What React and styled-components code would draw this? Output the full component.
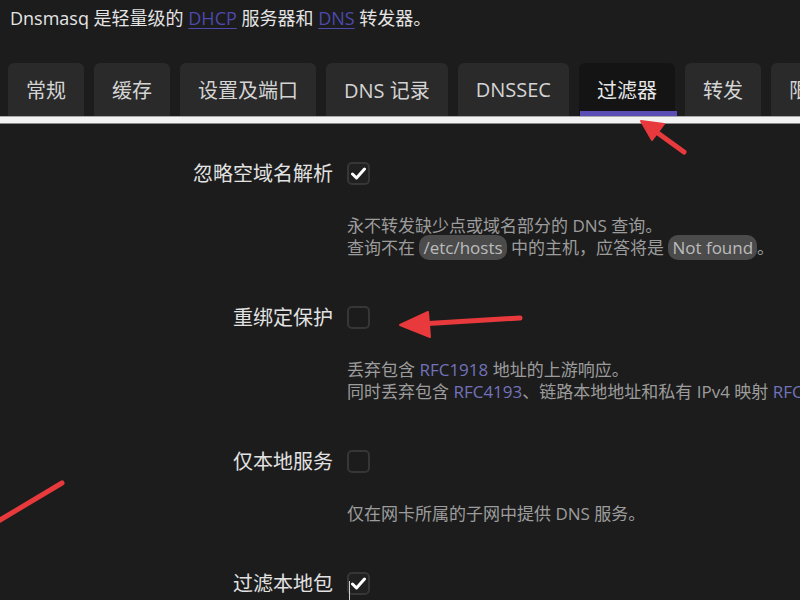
import React from "react";
import styled, { createGlobalStyle, css } from "styled-components";

const GlobalStyle = createGlobalStyle`
  html, body {
    margin: 0;
    padding: 0;
    background: #1c1c1c;
  }
  body {
    font-family: "Open Sans", "Noto Sans CJK SC", sans-serif;
    color: #e0e0e0;
  }
`;

//Page
const Page = styled.div`
  position: relative;
  width: 800px;
  height: 600px;
  overflow: hidden;
  background: #1c1c1c;
`;

const Intro = styled.p`
  margin: 0;
  padding: 5px 10px 0;
  height: 63px;
  box-sizing: border-box;
  font-size: 18px;
  line-height: 26px;
  color: #e4e4e4;
`;

const Link = styled.a`
  color: ${({muted}) => muted ? '#7272bb' : '#4d49ad'};
  text-decoration: ${({plain}) => plain ? 'none' : 'underline'};
  text-underline-offset: 3px;
`;

//Tabs
const TabBar = styled.nav`
  display: flex;
  gap: 10px;
  padding-left: 8px;
  white-space: nowrap;
  overflow: hidden;
`;

const Tab = styled.div`
  position: relative;
  flex-shrink: 0;
  display: flex;
  align-items: center;
  height: 53px;
  padding: 0 18px;
  border-radius: 6px 6px 0 0;
  background: #2a2a2a;
  color: #d4d4d4;
  font-size: 20px;

  ${({active}) => active && css`
    background: #141414;
    color: #e8e8e8;
    &::after {
      content: "";
      position: absolute;
      left: 1px;
      right: -2px;
      bottom: 0;
      height: 5px;
      background: #5a4db5;
    }
  `}
`;

const Strip = styled.div`
  height: 6px;
  background: #f2f2f2;
  border-top: 1px solid #a9a9a9;
  border-bottom: 1px solid #8a8a8a;
`;

//Form
const Form = styled.section`
  display: flex;
  flex-direction: column;
  gap: 47px;
  padding-top: 38px;
`;

const Row = styled.div`
  display: grid;
  grid-template-columns: 333px 1fr;
  column-gap: 14px;
  align-items: start;
`;

const Label = styled.label`
  text-align: right;
  font-size: 20px;
  line-height: 23px;
  color: #e2e2e2;
  white-space: nowrap;
`;

const Control = styled.div`
  display: flex;
  flex-direction: column;
  align-items: flex-start;
  min-width: 0;
`;

const Box = styled.span`
  display: flex;
  align-items: center;
  justify-content: center;
  width: 23px;
  height: 23px;
  box-sizing: border-box;
  border: 2px solid #363636;
  border-radius: 5px;
  background: ${({checked}) => checked ? '#202020' : '#1c1c1c'};
`;

const Desc = styled.div`
  margin-top: 30px;
  font-size: 17px;
  line-height: 22px;
  color: #9c9c9c;
  white-space: nowrap;
`;

const Code = styled.code`
  font-family: "Open Sans", "Noto Sans CJK SC", sans-serif;
  font-size: 17px;
  padding: 1px 4px;
  border-radius: 10px;
  background: #4b4b4b;
  color: #bcbcbc;
`;

const Overlay = styled.svg`
  position: absolute;
  inset: 0;
  pointer-events: none;
`;

function Check(){
  return (
    <svg width="15" height="13" viewBox="0 0 15 13">
      <path d="M1.5 7 L5.5 11 L13.5 2" fill="none" stroke="#ffffff" strokeWidth="3" strokeLinecap="round" strokeLinejoin="round"/>
    </svg>
  );
}

function Checkbox({checked}){
  return <Box checked={checked}>{checked && <Check/>}</Box>;
}

const tabs = ['常规', '缓存', '设置及端口', 'DNS 记录', 'DNSSEC', '过滤器', '转发', '限制'];

function Arrows(){
  return (
    <Overlay width="800" height="600" viewBox="0 0 800 600">
      <g stroke="#e8393c" strokeWidth="5" strokeLinecap="round" fill="#e8393c">
        <line x1="684" y1="152" x2="655" y2="131"/>
        <polygon points="641,121 664,124 652,140" strokeWidth="2" strokeLinejoin="round"/>
        <line x1="520" y1="318" x2="420" y2="324"/>
        <polygon points="400,325 428,312 430,337" strokeWidth="2" strokeLinejoin="round"/>
        <line x1="62" y1="483" x2="-10" y2="526"/>
      </g>
      <line x1="349.5" y1="581" x2="349.5" y2="600" stroke="#cfcfcf" strokeWidth="1"/>
    </Overlay>
  );
}

export default function App(){
  return (
    <Page>
      <GlobalStyle/>
      <Intro>
        Dnsmasq 是轻量级的 <Link>DHCP</Link> 服务器和 <Link>DNS</Link> 转发器。
      </Intro>
      <TabBar>
        {tabs.map(t => <Tab key={t} active={t === '过滤器'}>{t}</Tab>)}
      </TabBar>
      <Strip/>
      <Form>
        <Row>
          <Label>忽略空域名解析</Label>
          <Control>
            <Checkbox checked/>
            <Desc>
              永不转发缺少点或域名部分的 DNS 查询。<br/>
              查询不在 <Code>/etc/hosts</Code> 中的主机，应答将是 <Code>Not found</Code>。
            </Desc>
          </Control>
        </Row>
        <Row>
          <Label>重绑定保护</Label>
          <Control>
            <Checkbox/>
            <Desc>
              丢弃包含 <Link muted plain>RFC1918</Link> 地址的上游响应。<br/>
              同时丢弃包含 <Link muted plain>RFC4193</Link>、链路本地地址和私有 IPv4 映射 <Link muted plain>RFC4291</Link> IPv6 地址的上游响应。
            </Desc>
          </Control>
        </Row>
        <Row>
          <Label>仅本地服务</Label>
          <Control>
            <Checkbox/>
            <Desc>仅在网卡所属的子网中提供 DNS 服务。</Desc>
          </Control>
        </Row>
        <Row>
          <Label>过滤本地包</Label>
          <Control>
            <Checkbox checked/>
          </Control>
        </Row>
      </Form>
      <Arrows/>
    </Page>
  );
}
